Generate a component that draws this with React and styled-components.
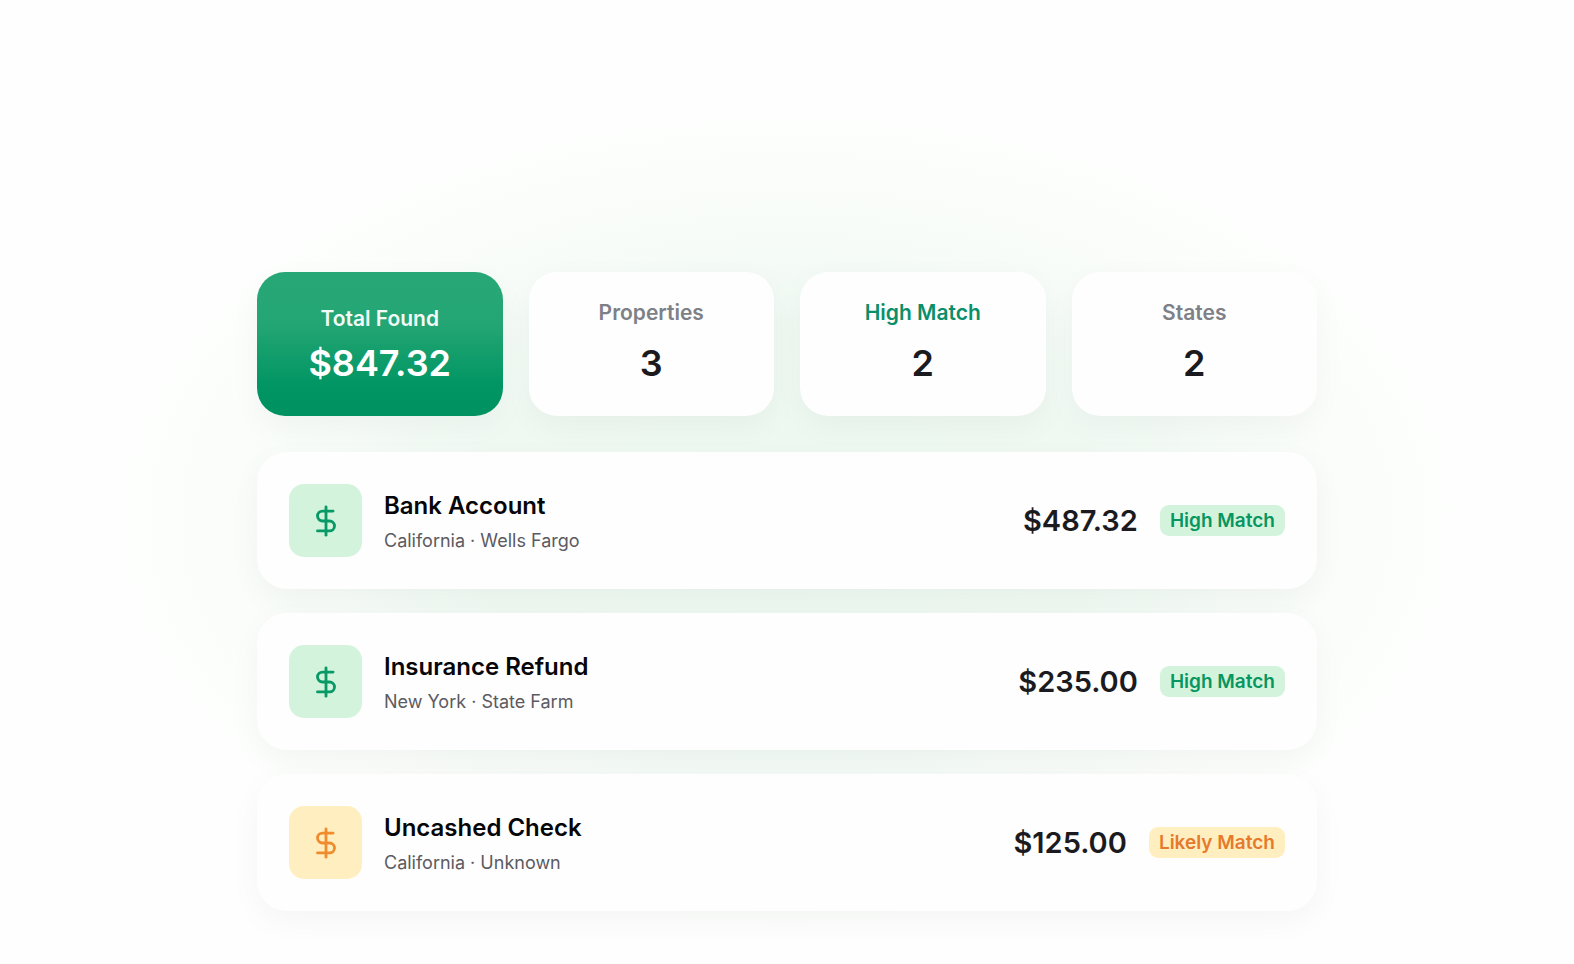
import React from "react";
import styled, { createGlobalStyle } from "styled-components";
import { DollarSign } from "lucide-react";

const GlobalStyle = createGlobalStyle`
  * {
    box-sizing: border-box;
  }
  body {
    margin: 0;
    background: #fefefe;
    font-family: Inter, "Liberation Sans", sans-serif;
    color: #1b1b1f;
  }
`;
const Page = styled.main`
  min-height: 100vh;
  padding: 272px 24px 48px;
  background: radial-gradient(
    ellipse 710px 430px at 50% 520px,
    #ecf8ef 0%,
    #eff9f2 45%,
    #f8fcf9 70%,
    #fcfefc 88%,
    #fefefe 100%
  );
`;
const Content = styled.div`
  display: flex;
  flex-direction: column;
  gap: 36px;
  max-width: 1060px;
  margin: 0 auto;
`;
const Stats = styled.section`
  display: grid;
  grid-template-columns: repeat(4, 1fr);
  gap: 26px;
  @media screen and (max-width: 768px) {
    grid-template-columns: repeat(2, 1fr);
  }
`;
const StatCard = styled.div`
  display: flex;
  flex-direction: column;
  justify-content: center;
  align-items: center;
  gap: ${(props) => (props.$filled ? 8 : 14)}px;
  height: 144px;
  padding-top: ${(props) => (props.$filled ? 2 : 0)}px;
  padding-bottom: ${(props) => (props.$filled ? 0 : 4)}px;
  border-radius: 28px;
  background: ${(props) =>
    props.$filled
      ? "linear-gradient(#28a776 0%, #24a674 35%, #009563 80%, #009260 100%)"
      : "#fefefe"};
  color: ${(props) => (props.$filled ? "#fff" : "#1b1b1f")};
  box-shadow: 0 10px 32px rgba(0, 0, 0, 0.04);
`;
const StatLabel = styled.span`
  font-size: 21px;
  line-height: 28px;
  font-weight: 600;
  color: ${(props) => props.$color};
`;
const StatValue = styled.span`
  font-size: 36px;
  line-height: 44px;
  font-weight: 600;
`;
const List = styled.ul`
  display: flex;
  flex-direction: column;
  gap: 24px;
  margin: 0;
  padding: 0;
  list-style: none;
`;
const Row = styled.li`
  display: flex;
  align-items: center;
  gap: 22px;
  padding: 32px;
  border-radius: 30px;
  background: #fefefe;
  box-shadow: 0 10px 32px rgba(0, 0, 0, 0.04);
`;
const IconTile = styled.div`
  display: flex;
  justify-content: center;
  align-items: center;
  width: 73px;
  height: 73px;
  border-radius: 15px;
  color: ${(props) => props.$tone.icon};
  background: ${(props) => props.$tone.background};
`;
const Info = styled.div`
  display: flex;
  flex: 1;
  flex-direction: column;
  gap: 6px;
  padding-top: 2px;
`;
const Name = styled.span`
  font-size: 24px;
  line-height: 32px;
  font-weight: 600;
  color: #060608;
`;
const Source = styled.span`
  font-size: 18px;
  line-height: 26px;
  color: #5b5a61;
`;
const Amount = styled.span`
  font-size: 29px;
  line-height: 36px;
  font-weight: 600;
`;
const Badge = styled.span`
  padding: 0 10px;
  border-radius: 9px;
  font-size: 19px;
  line-height: 31px;
  font-weight: 600;
  color: ${(props) => props.$tone.text};
  background: ${(props) => props.$tone.background};
`;

const tones = {
  high: { icon: "#079a66", text: "#069661", background: "#d4f3dc" },
  likely: { icon: "#f08c2e", text: "#e67a2c", background: "#ffefc0" },
};
const stats = [
  { label: "Total Found", value: "$847.32", color: "#f2fbf7", filled: true },
  { label: "Properties", value: "3", color: "#7e8087" },
  { label: "High Match", value: "2", color: "#0a8f6a" },
  { label: "States", value: "2", color: "#7e8087" },
];
const properties = [
  {
    name: "Bank Account",
    source: "California · Wells Fargo",
    amount: "$487.32",
    match: "High Match",
    tone: tones.high,
  },
  {
    name: "Insurance Refund",
    source: "New York · State Farm",
    amount: "$235.00",
    match: "High Match",
    tone: tones.high,
  },
  {
    name: "Uncashed Check",
    source: "California · Unknown",
    amount: "$125.00",
    match: "Likely Match",
    tone: tones.likely,
  },
];

const App = () => (
  <>
    <GlobalStyle />
    <Page>
      <Content>
        <Stats>
          {stats.map((stat) => (
            <StatCard key={stat.label} $filled={stat.filled}>
              <StatLabel $color={stat.color}>{stat.label}</StatLabel>
              <StatValue>{stat.value}</StatValue>
            </StatCard>
          ))}
        </Stats>
        <List>
          {properties.map((item) => (
            <Row key={item.name}>
              <IconTile $tone={item.tone}>
                <DollarSign size={34} aria-hidden="true" />
              </IconTile>
              <Info>
                <Name>{item.name}</Name>
                <Source>{item.source}</Source>
              </Info>
              <Amount>{item.amount}</Amount>
              <Badge $tone={item.tone}>{item.match}</Badge>
            </Row>
          ))}
        </List>
      </Content>
    </Page>
  </>
);

export default App;
